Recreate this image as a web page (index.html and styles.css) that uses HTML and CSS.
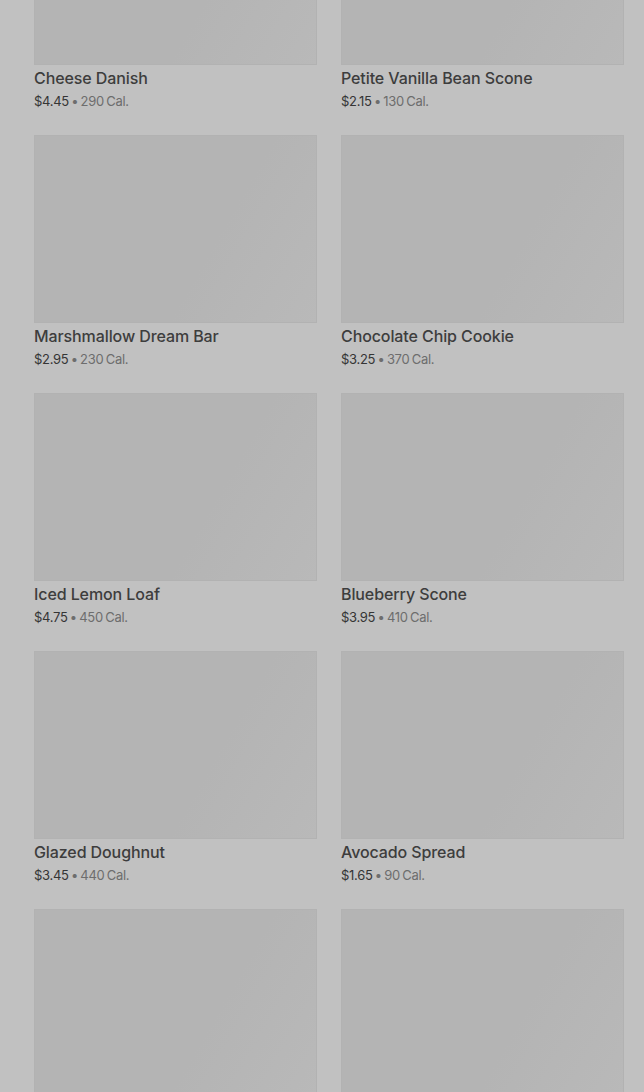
FILE: index.html
```html
<!DOCTYPE html>
<html lang="en">
<head>
  <meta charset="UTF-8">
  <meta name="viewport" content="width=device-width, initial-scale=1.0">
  <title>Bakery Menu</title>
  <link rel="stylesheet" href="styles.css">
</head>
<body>

  <!-- Product grid (dimmed behind a modal) -->
  <div class="menu-grid">
    <div class="product">
      <div class="product-image"></div>
      <p class="product-name">Cheese Danish</p>
      <p class="product-meta"><span class="price">$4.45</span> &bull; 290 Cal.</p>
    </div>
    <div class="product">
      <div class="product-image"></div>
      <p class="product-name">Petite Vanilla Bean Scone</p>
      <p class="product-meta"><span class="price">$2.15</span> &bull; 130 Cal.</p>
    </div>
    <div class="product">
      <div class="product-image"></div>
      <p class="product-name">Marshmallow Dream Bar</p>
      <p class="product-meta"><span class="price">$2.95</span> &bull; 230 Cal.</p>
    </div>
    <div class="product">
      <div class="product-image"></div>
      <p class="product-name">Chocolate Chip Cookie</p>
      <p class="product-meta"><span class="price">$3.25</span> &bull; 370 Cal.</p>
    </div>
    <div class="product">
      <div class="product-image"></div>
      <p class="product-name">Iced Lemon Loaf</p>
      <p class="product-meta"><span class="price">$4.75</span> &bull; 450 Cal.</p>
    </div>
    <div class="product">
      <div class="product-image"></div>
      <p class="product-name">Blueberry Scone</p>
      <p class="product-meta"><span class="price">$3.95</span> &bull; 410 Cal.</p>
    </div>
    <div class="product">
      <div class="product-image"></div>
      <p class="product-name">Glazed Doughnut</p>
      <p class="product-meta"><span class="price">$3.45</span> &bull; 440 Cal.</p>
    </div>
    <div class="product">
      <div class="product-image"></div>
      <p class="product-name">Avocado Spread</p>
      <p class="product-meta"><span class="price">$1.65</span> &bull; 90 Cal.</p>
    </div>
    <div class="product">
      <div class="product-image"></div>
    </div>
    <div class="product">
      <div class="product-image"></div>
    </div>
  </div>

</body>
</html>
```

FILE: styles.css
```css
body {
  font-family: 'Inter', 'Liberation Sans', sans-serif;
  background-color: #c1c1c1;
  color: #3b3b3b;
  margin: 0;
  padding: 0;
  overflow: hidden;
}

.menu-grid {
  display: grid;
  grid-template-columns: 283px 283px;
  column-gap: 24px;
  row-gap: 25px;
  padding: 0 20px 0 34px;
  margin-top: -123px;
}

.product-image {
  height: 188px;
  background: linear-gradient(120deg, #b4b4b4 0%, #b4b4b4 62%, #b9b9b9 100%);
  box-shadow: inset 0 0 0 1px #b2b2b2;
}

.product-name {
  margin: 3px 0 0;
  font-size: 16px;
  line-height: 20px;
  font-weight: 500;
  color: #3d3d3d;
  letter-spacing: -0.1px;
}

.product-meta {
  margin: 4px 0 0;
  font-size: 13px;
  line-height: 18px;
  color: #6d6d6d;
  letter-spacing: -0.3px;
  word-spacing: -1px;
}

.price {
  color: #353535;
}
```
